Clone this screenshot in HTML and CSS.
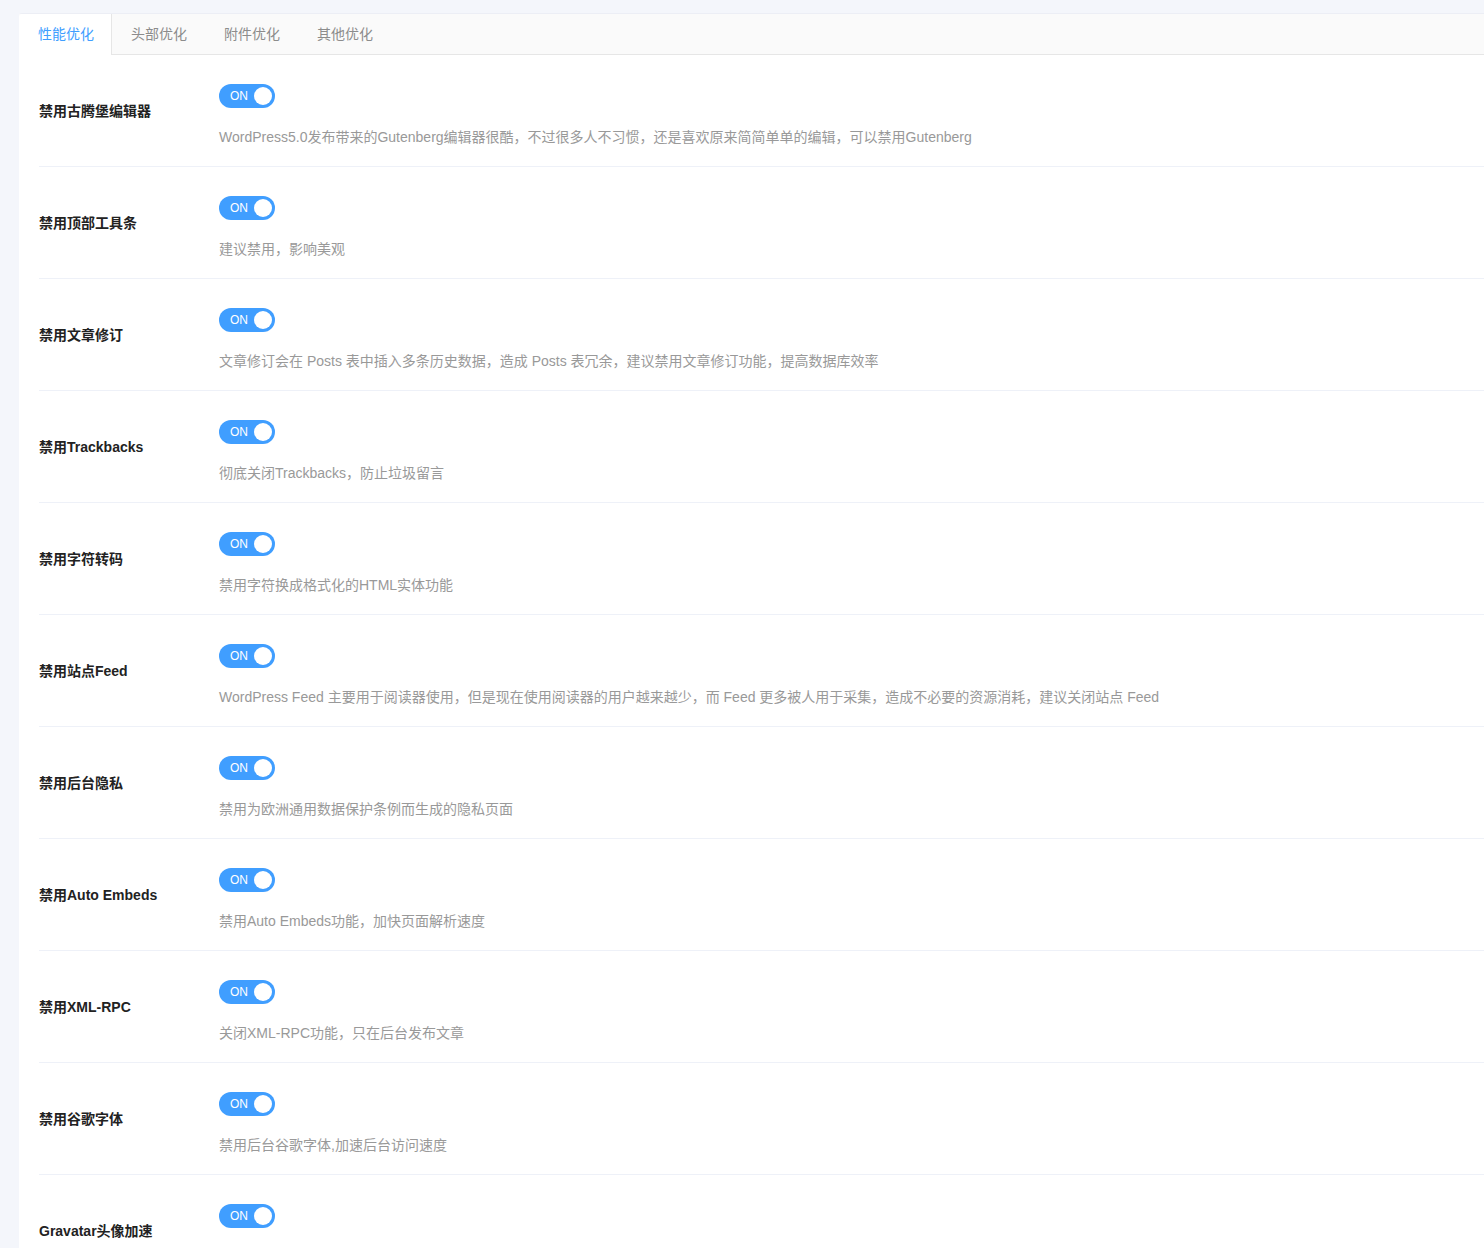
FILE: index.html
```html
<!DOCTYPE html>
<html lang="zh-CN">
<head>
<meta charset="utf-8">
<title>性能优化</title>
<link rel="stylesheet" href="styles.css">
</head>
<body>
<div class="panel">
  <div class="tabs">
    <div class="tab active">性能优化</div>
    <div class="tab">头部优化</div>
    <div class="tab">附件优化</div>
    <div class="tab">其他优化</div>
  </div>
  <div class="rows">
    <div class="row">
      <div class="label">禁用古腾堡编辑器</div>
      <div class="field"><span class="switch"><span class="on">ON</span><span class="knob"></span></span><div class="desc">WordPress5.0发布带来的Gutenberg编辑器很酷，不过很多人不习惯，还是喜欢原来简简单单的编辑，可以禁用Gutenberg</div></div>
    </div>
    <div class="row">
      <div class="label">禁用顶部工具条</div>
      <div class="field"><span class="switch"><span class="on">ON</span><span class="knob"></span></span><div class="desc">建议禁用，影响美观</div></div>
    </div>
    <div class="row">
      <div class="label">禁用文章修订</div>
      <div class="field"><span class="switch"><span class="on">ON</span><span class="knob"></span></span><div class="desc">文章修订会在 Posts 表中插入多条历史数据，造成 Posts 表冗余，建议禁用文章修订功能，提高数据库效率</div></div>
    </div>
    <div class="row">
      <div class="label">禁用Trackbacks</div>
      <div class="field"><span class="switch"><span class="on">ON</span><span class="knob"></span></span><div class="desc">彻底关闭Trackbacks，防止垃圾留言</div></div>
    </div>
    <div class="row">
      <div class="label">禁用字符转码</div>
      <div class="field"><span class="switch"><span class="on">ON</span><span class="knob"></span></span><div class="desc">禁用字符换成格式化的HTML实体功能</div></div>
    </div>
    <div class="row">
      <div class="label">禁用站点Feed</div>
      <div class="field"><span class="switch"><span class="on">ON</span><span class="knob"></span></span><div class="desc">WordPress Feed 主要用于阅读器使用，但是现在使用阅读器的用户越来越少，而 Feed 更多被人用于采集，造成不必要的资源消耗，建议关闭站点 Feed</div></div>
    </div>
    <div class="row">
      <div class="label">禁用后台隐私</div>
      <div class="field"><span class="switch"><span class="on">ON</span><span class="knob"></span></span><div class="desc">禁用为欧洲通用数据保护条例而生成的隐私页面</div></div>
    </div>
    <div class="row">
      <div class="label">禁用Auto Embeds</div>
      <div class="field"><span class="switch"><span class="on">ON</span><span class="knob"></span></span><div class="desc">禁用Auto Embeds功能，加快页面解析速度</div></div>
    </div>
    <div class="row">
      <div class="label">禁用XML-RPC</div>
      <div class="field"><span class="switch"><span class="on">ON</span><span class="knob"></span></span><div class="desc">关闭XML-RPC功能，只在后台发布文章</div></div>
    </div>
    <div class="row">
      <div class="label">禁用谷歌字体</div>
      <div class="field"><span class="switch"><span class="on">ON</span><span class="knob"></span></span><div class="desc">禁用后台谷歌字体,加速后台访问速度</div></div>
    </div>
    <div class="row">
      <div class="label">Gravatar头像加速</div>
      <div class="field"><span class="switch"><span class="on">ON</span><span class="knob"></span></span><div class="desc">使用国内镜像加速Gravatar头像加载</div></div>
    </div>
  </div>
</div>
</body>
</html>
```
FILE: styles.css
```css
html, body {
  margin: 0;
  padding: 0;
}
body {
  background: #f4f6fb;
  font-family: "Liberation Sans", "Noto Sans CJK SC", sans-serif;
  font-size: 14px;
  padding: 13px 0 0 19px;
}
.panel {
  background: #ffffff;
  border-top: 1px solid #eceef5;
  border-top-left-radius: 3px;
}
.tabs {
  display: flex;
  height: 40px;
  background: #fafafa;
  border-bottom: 1px solid #e6e6e6;
}
.tab {
  width: 93px;
  box-sizing: border-box;
  padding-left: 19px;
  line-height: 40px;
  color: #8c8c8c;
  font-size: 14px;
}
.tab.active {
  background: #ffffff;
  color: #409eff;
  border-right: 1px solid #e6e6e6;
  border-top-left-radius: 3px;
  height: 41px;
}
.rows {
  padding-left: 20px;
}
.row {
  display: flex;
  align-items: flex-start;
  padding: 29px 0 19px;
  border-bottom: 1px solid #eef1f8;
}
.label {
  width: 180px;
  flex: none;
  font-weight: bold;
  color: #222222;
  line-height: 20px;
  margin-top: 17px;
}
.field {
  flex: 1;
}
.switch {
  display: flex;
  align-items: center;
  justify-content: space-between;
  box-sizing: border-box;
  width: 56px;
  height: 24px;
  border-radius: 12px;
  background: #409eff;
  padding: 0 3px 0 11px;
}
.on {
  color: #ffffff;
  font-size: 12px;
  line-height: 24px;
}
.knob {
  width: 18px;
  height: 18px;
  border-radius: 50%;
  background: #ffffff;
}
.desc {
  margin-top: 19px;
  line-height: 20px;
  color: #999999;
}
```
